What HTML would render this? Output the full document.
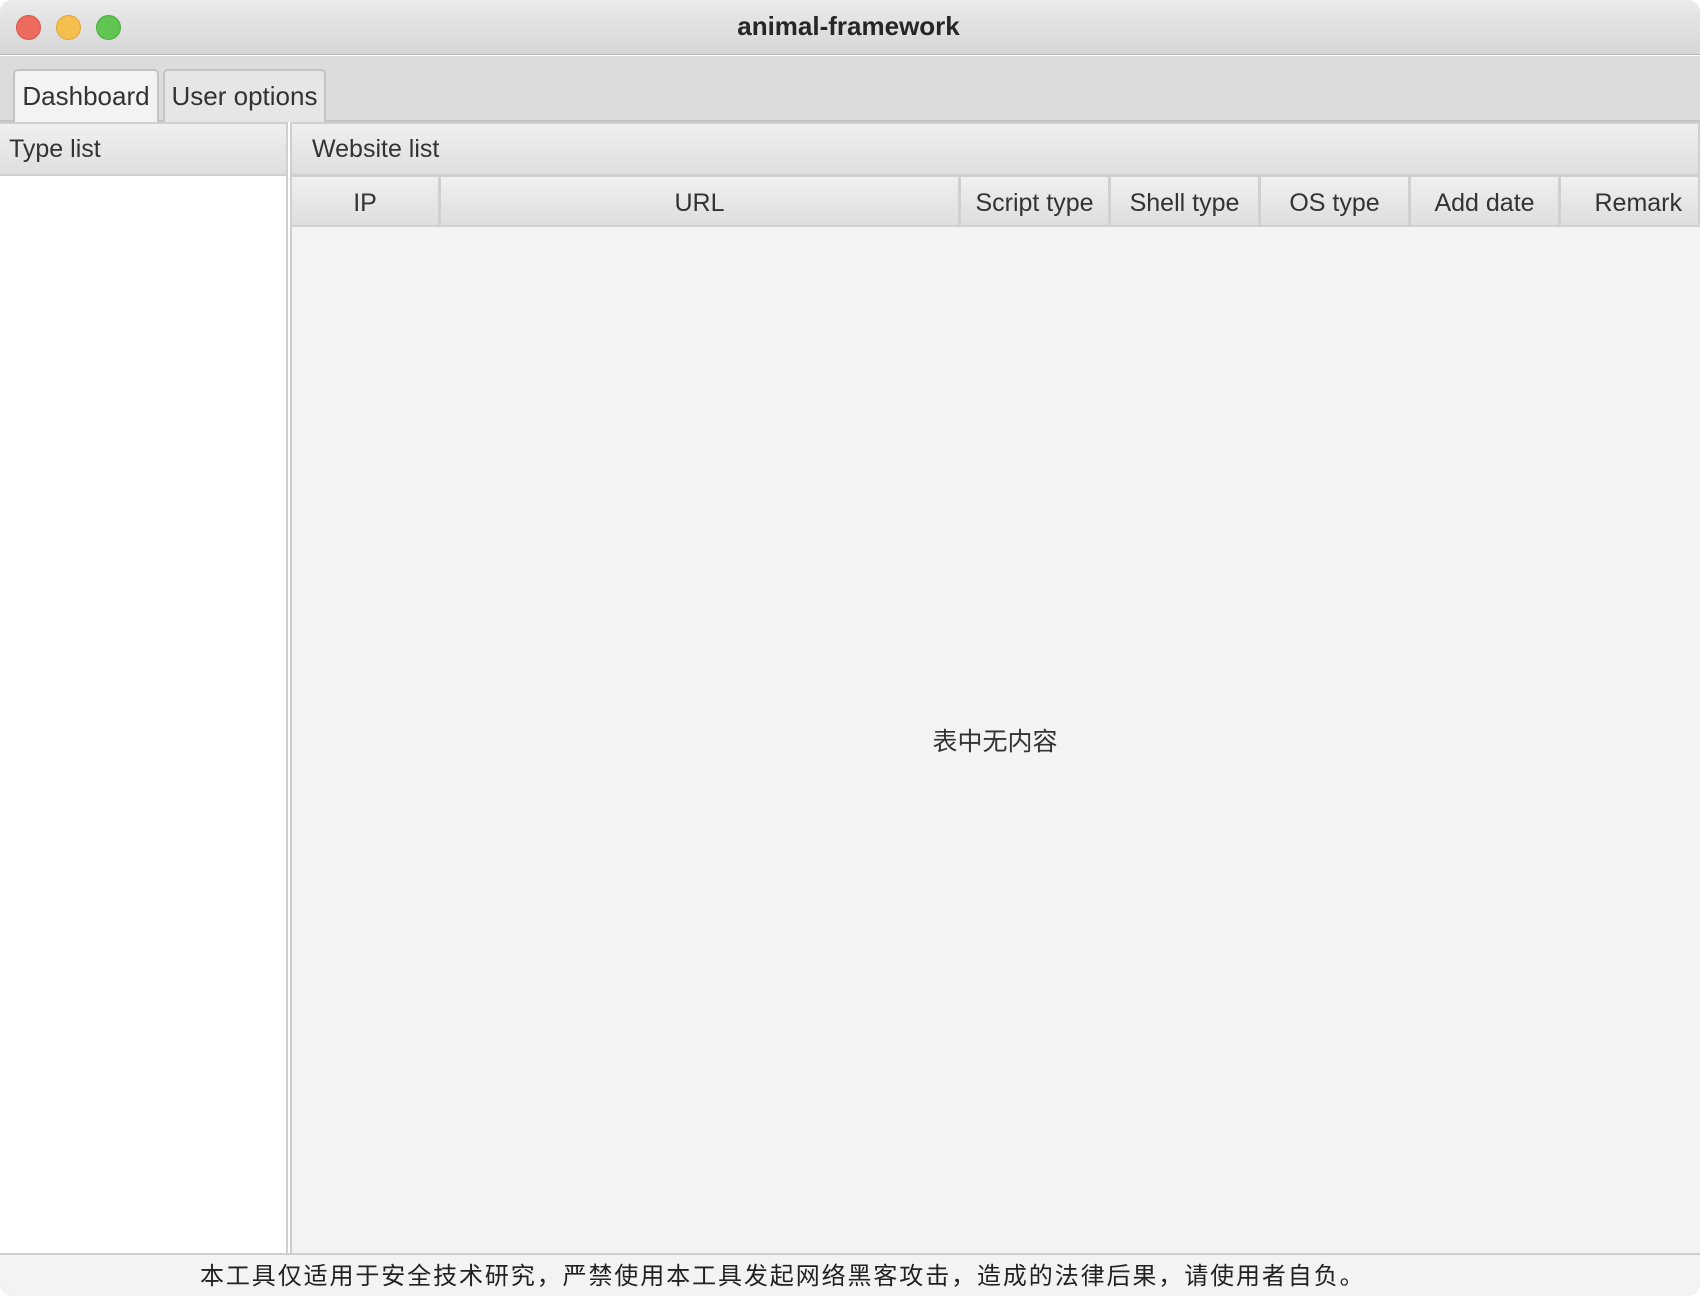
<!DOCTYPE html>
<html><head><meta charset="utf-8"><style>
*{box-sizing:border-box;margin:0;padding:0}
body{width:1700px;height:1296px;background:#fff;font-family:"Liberation Sans","Noto Sans CJK SC",sans-serif;color:#333;position:relative;overflow:hidden}
.a{position:absolute}
.title{left:0;top:0;width:1700px;height:55px;background:linear-gradient(#ebebeb,#d6d6d6);border-bottom:1px solid #b5b5b5;border-radius:12px 12px 0 0}
.dot{width:25px;height:25px;border-radius:50%;top:15px}
.tabbar{left:0;top:56px;width:1700px;height:66px;background:#dcdcdc;border-bottom:2px solid #c4c4c4}
.tab{top:69px;height:53px;border:2px solid #c4c4c4;border-bottom:none;border-radius:5px 5px 0 0;font-size:26px;line-height:50px;text-align:center}
.hdr{background:linear-gradient(#f0f0f0,#dedede);border:2px solid #cfcfcf;font-size:25px;line-height:50px}
.col{top:175px;height:52px;background:linear-gradient(#f0f0f0,#dedede);border:2px solid #d0d0d0;border-left:1px solid #d0d0d0;font-size:25px;line-height:52px;text-align:center}
</style></head><body>
<div class="a title"></div>
<div class="a dot" style="left:16px;background:#ed6a5e;border:1px solid #d9564b"></div>
<div class="a dot" style="left:56px;background:#f5bf4f;border:1px solid #dea53a"></div>
<div class="a dot" style="left:96px;background:#61c554;border:1px solid #4ead42"></div>
<div class="a" style="left:0;top:11px;width:1697px;text-align:center;font-weight:bold;font-size:26px;color:#262626">animal-framework</div>
<div class="a tabbar"></div>
<div class="a tab" style="left:13px;width:146px;background:#f3f3f3;height:55px">Dashboard</div>
<div class="a tab" style="left:163px;width:163px;background:#e6e6e6">User options</div>
<div class="a" style="left:0;top:122px;width:288px;height:1131px;background:#fff;border-right:2px solid #cfcfcf"></div>
<div class="a hdr" style="left:0;top:122px;width:288px;height:54px;padding-left:9px;border-left:none">Type list</div>
<div class="a" style="left:290px;top:122px;width:1410px;height:1131px;background:#f3f3f3;border-left:2px solid #cfcfcf"></div>
<div class="a hdr" style="left:290px;top:122px;width:1410px;height:54px;padding-left:20px">Website list</div>
<div class="a col" style="left:291px;width:149px">IP</div>
<div class="a col" style="left:440px;width:520px">URL</div>
<div class="a col" style="left:960px;width:150px">Script type</div>
<div class="a col" style="left:1110px;width:150px">Shell type</div>
<div class="a col" style="left:1260px;width:150px">OS type</div>
<div class="a col" style="left:1410px;width:150px">Add date</div>
<div class="a col" style="left:1560px;width:140px;text-align:right;padding-right:16px">Remark</div>
<div class="a" style="left:290px;top:722px;width:1410px;text-align:center;font-size:25px;color:#333">表中无内容</div>
<div class="a" style="left:0;top:1253px;width:1700px;height:43px;background:#f3f3f3;border-top:2px solid #cfcfcf;border-radius:0 0 12px 12px"></div>
<div class="a" style="left:200px;top:1256px;font-size:24px;letter-spacing:1.9px;color:#222;white-space:nowrap">本工具仅适用于安全技术研究，严禁使用本工具发起网络黑客攻击，造成的法律后果，请使用者自负。</div>
</body></html>
